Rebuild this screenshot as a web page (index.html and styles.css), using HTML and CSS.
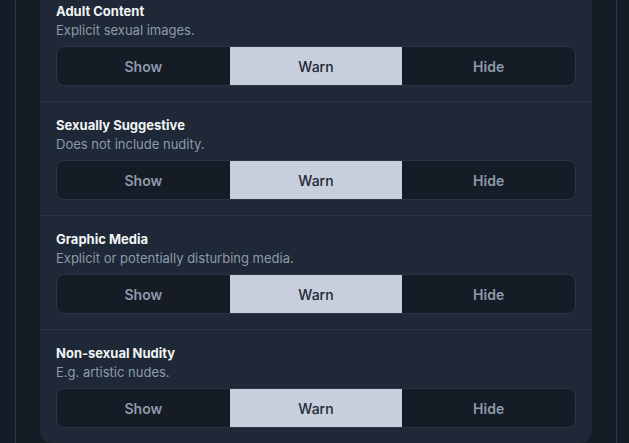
FILE: index.html
```html
<!DOCTYPE html>
<html lang="en">
<head>
    <meta charset="UTF-8">
    <meta name="viewport" content="width=device-width, initial-scale=1.0">
    <title>Content filters</title>
    <link rel="stylesheet" href="styles.css">
</head>
<body>
    <main class="column">
        <section class="card">
            <div class="pref">
                <div class="pref__title">Adult Content</div>
                <div class="pref__desc">Explicit sexual images.</div>
                <div class="seg">
                    <button class="seg__btn">Show</button>
                    <button class="seg__btn seg__btn--on">Warn</button>
                    <button class="seg__btn">Hide</button>
                </div>
            </div>
            <div class="pref">
                <div class="pref__title">Sexually Suggestive</div>
                <div class="pref__desc">Does not include nudity.</div>
                <div class="seg">
                    <button class="seg__btn">Show</button>
                    <button class="seg__btn seg__btn--on">Warn</button>
                    <button class="seg__btn">Hide</button>
                </div>
            </div>
            <div class="pref">
                <div class="pref__title">Graphic Media</div>
                <div class="pref__desc">Explicit or potentially disturbing media.</div>
                <div class="seg">
                    <button class="seg__btn">Show</button>
                    <button class="seg__btn seg__btn--on">Warn</button>
                    <button class="seg__btn">Hide</button>
                </div>
            </div>
            <div class="pref">
                <div class="pref__title">Non-sexual Nudity</div>
                <div class="pref__desc">E.g. artistic nudes.</div>
                <div class="seg">
                    <button class="seg__btn">Show</button>
                    <button class="seg__btn seg__btn--on">Warn</button>
                    <button class="seg__btn">Hide</button>
                </div>
            </div>
        </section>
    </main>
</body>
</html>
```

FILE: styles.css
```css
html, body {
    height: 100%;
}

body {
    overflow: hidden;
    margin: 0;
    background: #161c26;
    color: #f1f3f5;
    font: 14px/1.4 Inter, "Noto Sans", sans-serif;
}

.column {
    box-sizing: border-box;
    margin-left: 15px;
    width: 602px;
    min-height: 100%;
    padding: 0 24px;
    border-left: 1px solid #2a3545;
    border-right: 1px solid #2a3545;
}

.card {
    margin-top: -12px;
    border-radius: 0 0 12px 12px;
    background: #1e2836;
}

.pref {
    padding: 14px 16px 15px;
}

.pref + .pref {
    border-top: 1px solid #2a3545;
}

.pref__title {
    font-size: 13px;
    font-weight: 700;
    line-height: 19px;
}

.pref__desc {
    color: #8d9aab;
    font-size: 13px;
    line-height: 19px;
}

.seg {
    display: grid;
    grid-template-columns: repeat(3, 1fr);
    margin-top: 6px;
    border: 1px solid #2a3545;
    border-radius: 8px;
    height: 38px;
    overflow: hidden;
    background: #161c26;
}

.seg__btn {
    border: 0;
    padding: 0;
    background: none;
    color: #8d9aab;
    font: 600 14px Inter, "Noto Sans", sans-serif;
}

.seg__btn--on {
    background: #c6cfdb;
    color: #1e2836;
    font-weight: 500;
}
```
